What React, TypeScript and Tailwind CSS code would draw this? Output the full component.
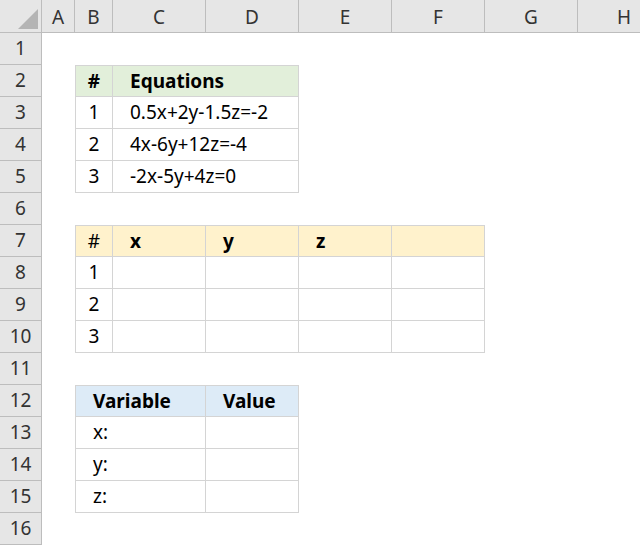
import React from "react";

const cols = ["A", "B", "C", "D", "E", "F", "G", "H"];
const B = "border-[#d4d4d4]";
const COL: Record<number, string> = { 1: "col-start-1", 2: "col-start-2", 3: "col-start-3", 4: "col-start-4", 5: "col-start-5", 6: "col-start-6", 7: "col-start-7", 8: "col-start-8", 9: "col-start-9" };
const SPAN: Record<number, string> = { 1: "col-span-1", 2: "col-span-2" };
const ROW: Record<number, string> = { 1: "row-start-1", 2: "row-start-2", 3: "row-start-3", 4: "row-start-4", 5: "row-start-5", 6: "row-start-6", 7: "row-start-7", 8: "row-start-8", 9: "row-start-9", 10: "row-start-10", 11: "row-start-11", 12: "row-start-12", 13: "row-start-13", 14: "row-start-14", 15: "row-start-15", 16: "row-start-16", 17: "row-start-17" };

function Cell({ c, r, span = 1, bg = "bg-white", cls = "", children, top = false, left = false }: any) {
  return (
    <div className={`${COL[c]} ${SPAN[span]} ${ROW[r]} ${bg} border-r border-b ${B} ${top ? "border-t" : ""} ${left ? "border-l" : ""} flex items-center ${cls}`}>
      {children}
    </div>
  );
}

const HDR = "bg-[#e6e6e6] border-r border-b border-[#bdbdbd] flex items-center justify-center text-[#333]";

export default function App() {
  return (
    <div className="w-[640px] h-[549px] overflow-hidden bg-white text-black text-[19px] font-['Open_Sans','Liberation_Sans',sans-serif]">
      <div className="grid grid-cols-[42px_33px_38px_93px_93px_93px_93px_93px_93px] grid-rows-[33px_repeat(16,32px)]">
        <div className={`col-start-1 row-start-1 ${HDR} relative`}>
          <svg className="absolute right-[3px] bottom-[3px]" width="20" height="20"><polygon points="20,0 20,20 0,20" fill="#b4b4b4" /></svg>
        </div>
        {cols.map((l, i) => (
          <div key={l} className={`${COL[i + 2]} row-start-1 ${HDR} pt-[2px]`}>{l}</div>
        ))}
        {Array.from({ length: 16 }, (_, i) => (
          <div key={i} className={`col-start-1 ${ROW[i + 2]} ${HDR}`}>{i + 1}</div>
        ))}

        <Cell c={3} r={3} top left bg="bg-[#e2efda]" cls="justify-center font-bold">#</Cell>
        <Cell c={4} r={3} span={2} top bg="bg-[#e2efda]" cls="pl-[17px] font-bold">Equations</Cell>
        {["0.5x+2y-1.5z=-2", "4x-6y+12z=-4", "-2x-5y+4z=0"].map((e, i) => (
          <React.Fragment key={e}>
            <Cell c={3} r={i + 4} left cls="justify-center">{i + 1}</Cell>
            <Cell c={4} r={i + 4} span={2} cls="pl-[17px]">{e}</Cell>
          </React.Fragment>
        ))}

        <Cell c={3} r={8} top left bg="bg-[#fff2cc]" cls="justify-center">#</Cell>
        {["x", "y", "z", ""].map((h, i) => (
          <Cell key={i} c={4 + i} r={8} top bg="bg-[#fff2cc]" cls="pl-[17px] font-bold">{h}</Cell>
        ))}
        {[1, 2, 3].map((n, i) => (
          <React.Fragment key={n}>
            <Cell c={3} r={9 + i} left cls="justify-center">{n}</Cell>
            {[0, 1, 2, 3].map((j) => <Cell key={j} c={4 + j} r={9 + i} />)}
          </React.Fragment>
        ))}

        <Cell c={3} r={13} span={2} top left bg="bg-[#ddebf7]" cls="pl-[17px] font-bold">Variable</Cell>
        <Cell c={5} r={13} top bg="bg-[#ddebf7]" cls="pl-[17px] font-bold">Value</Cell>
        {["x:", "y:", "z:"].map((v, i) => (
          <React.Fragment key={v}>
            <Cell c={3} r={14 + i} span={2} left cls="pl-[17px]">{v}</Cell>
            <Cell c={5} r={14 + i} />
          </React.Fragment>
        ))}
      </div>
    </div>
  );
}
